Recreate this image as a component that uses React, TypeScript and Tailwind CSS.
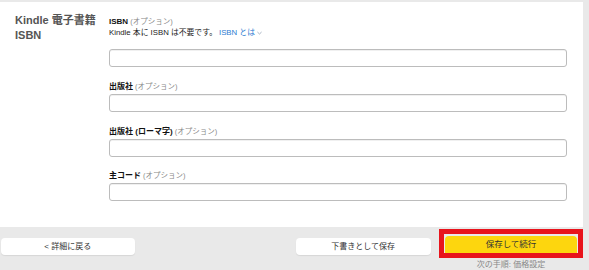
const font = { fontFamily: '"Liberation Sans", "Noto Sans CJK JP", sans-serif' };

const inputCls =
  "h-[18px] rounded-[3px] border border-[#bcbcbc] bg-white shadow-[inset_0_1px_0_rgba(0,0,0,0.06)]";

const Label = ({ text }: { text: string }) => (
  <div className="h-[11px] overflow-visible text-[8px] leading-[11px] text-[#111] whitespace-nowrap">
    <span className="font-bold">{text}</span>
    <span className="text-[#888] text-[7.5px]"> (オプション)</span>
  </div>
);

const Field = ({ label, top }: { label: string; top: string }) => (
  <div className={top}>
    <Label text={label} />
    <div className={`mt-[2px] ${inputCls}`} />
  </div>
);

export default function App() {
  return (
    <div style={font} className="w-[589px] h-[270px] bg-[#e9e9e9] pt-[2px] pr-[6px] overflow-hidden">
      <div className="h-[225px] bg-white flex">
        <div className="w-[109px] shrink-0 pl-[15px] pt-[11px] text-[11px] leading-[15px] font-bold text-[#555]">
          <div className="h-[15px] whitespace-nowrap">Kindle 電子書籍</div>
          <div className="h-[15px]">ISBN</div>
        </div>
        <div className="flex-1 pr-[16px] pt-[14px]">
          <Label text="ISBN" />
          <div className="h-[11px] text-[7.8px] leading-[11px] text-[#222] flex items-center whitespace-nowrap">
            <span>Kindle 本に ISBN は不要です。</span>
            <span className="ml-[2px] text-[#2b7bd1]">ISBN とは</span>
            <svg width="5" height="4" viewBox="0 0 6 4" className="ml-[2px] mt-[1px]">
              <path d="M0.5 0.8 L3 3.2 L5.5 0.8" fill="none" stroke="#8a9bb0" strokeWidth="0.9" />
            </svg>
          </div>
          <div className={`mt-[11px] ${inputCls}`} />
          <Field label="出版社" top="mt-[14px]" />
          <Field label="出版社 (ローマ字)" top="mt-[14px]" />
          <Field label="主コード" top="mt-[13px]" />
        </div>
      </div>
      <div className="flex items-start pt-[2px]">
        <button className="mt-[9px] ml-[1px] w-[134px] h-[17px] rounded-[4px] bg-white shadow-[0_1px_1px_rgba(0,0,0,0.08)] text-[8px] text-[#333]">
          &lt; 詳細に戻る
        </button>
        <button className="mt-[9px] ml-[161px] w-[136px] h-[17px] rounded-[4px] bg-white shadow-[0_1px_1px_rgba(0,0,0,0.08)] text-[8px] text-[#333]">
          下書きとして保存
        </button>
        <div className="ml-[8px] flex flex-col items-center">
          <div className="w-[144px] h-[29px] border-[5px] border-[#e8141c] pt-[2px] px-[1px]">
            <div className="h-[17px] rounded-t-[4px] bg-[#fdd60e] flex items-center justify-center text-[8.5px] text-[#333]">
              保存して続行
            </div>
          </div>
          <div className="mt-[2px] text-[8px] leading-[10px] text-[#888]">次の手順: 価格設定</div>
        </div>
      </div>
    </div>
  );
}
